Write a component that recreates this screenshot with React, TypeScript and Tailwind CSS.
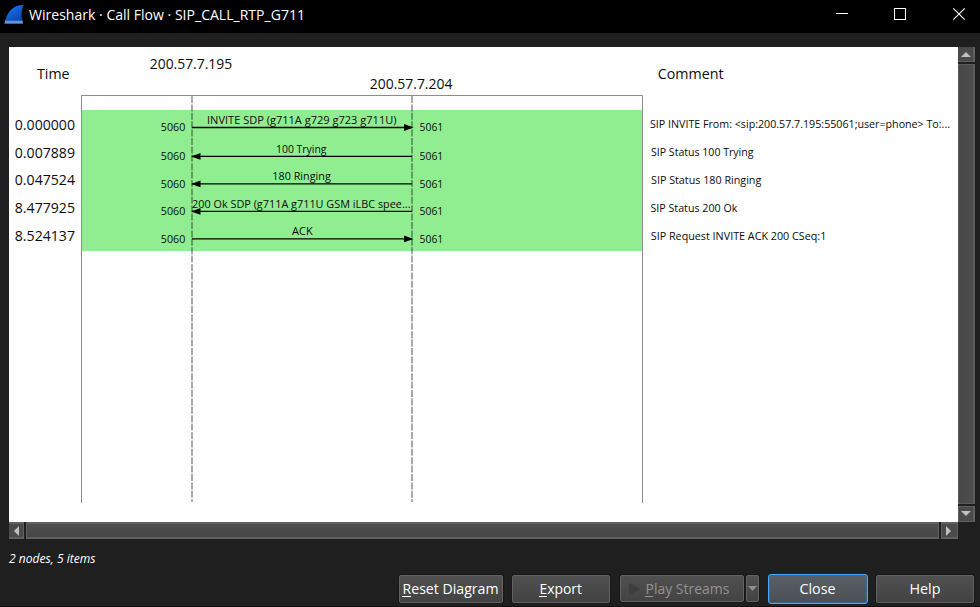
import React from "react";

const INK = "#0c0c0c";

type LabelProps = { x: number; y: number; w: number; size?: number; children: string };

function Label({ x, y, w, size = 11.3, children }: LabelProps) {
  return (
    <text x={x} y={y} fontSize={size} textLength={w} lengthAdjust="spacingAndGlyphs" fill={INK}>
      {children}
    </text>
  );
}

type Row = {
  time: string; timeY: number; portY: number; line: number; dir: "right" | "left";
  label: string; lx: number; lw: number; ly: number;
  comment: string; cx: number; cw: number; cy: number;
};

const rows: Row[] = [
  { time: "0.000000", timeY: 130, portY: 131, line: 127.5, dir: "right", label: "INVITE SDP (g711A g729 g723 g711U)", lx: 207, lw: 189.5, ly: 124, comment: "SIP INVITE From: <sip:200.57.7.195:55061;user=phone> To:...", cx: 650, cw: 300, cy: 128 },
  { time: "0.007889", timeY: 158, portY: 160, line: 156.4, dir: "left", label: "100 Trying", lx: 276, lw: 50.5, ly: 153, comment: "SIP Status 100 Trying", cx: 651, cw: 102.5, cy: 156 },
  { time: "0.047524", timeY: 185, portY: 188, line: 183.9, dir: "left", label: "180 Ringing", lx: 272.3, lw: 58.5, ly: 180, comment: "SIP Status 180 Ringing", cx: 651, cw: 110.3, cy: 184 },
  { time: "8.477925", timeY: 213, portY: 215, line: 211.4, dir: "left", label: "200 Ok SDP (g711A g711U GSM iLBC spee...", lx: 192, lw: 218.5, ly: 208, comment: "SIP Status 200 Ok", cx: 650.5, cw: 86.8, cy: 212 },
  { time: "8.524137", timeY: 241, portY: 243, line: 238.9, dir: "right", label: "ACK", lx: 292, lw: 20.7, ly: 235, comment: "SIP Request INVITE ACK 200 CSeq:1", cx: 650.8, cw: 175.5, cy: 240 },
];

function Arrow({ y, dir }: { y: number; dir: "right" | "left" }) {
  return (
    <g>
      <path d={`M192 ${y}H412`} stroke="#000" strokeWidth="1.4" />
      <path
        d={dir === "right" ? `M413.5 ${y}L404 ${y - 3.4}V${y + 3.4}Z` : `M191 ${y}L200.5 ${y - 3.4}V${y + 3.4}Z`}
        fill="#000"
      />
    </g>
  );
}

function FlowDiagram() {
  return (
    <svg className="block bg-white" width="949" height="475" viewBox="9 47 949 475">
      <rect x="81" y="110" width="561" height="141" fill="#90ee90" />
      <path d="M81.5 503V95.5H642.5V503" fill="none" stroke="#8c8c8c" />
      <path d="M192 96V502M412 96V502" stroke="#000" strokeOpacity="0.42" strokeWidth="1.6" strokeDasharray="7 1.4" />
      <Label x={37} y={79} w={32.5} size={15.3}>Time</Label>
      <Label x={149.8} y={69} w={82.3} size={15.3}>200.57.7.195</Label>
      <Label x={369.8} y={89} w={82.6} size={15.3}>200.57.7.204</Label>
      <Label x={657.8} y={79} w={65.8} size={15.3}>Comment</Label>
      {rows.map((r) => (
        <g key={r.time}>
          <Label x={14.8} y={r.timeY} w={60.2} size={15.3}>{r.time}</Label>
          <Label x={160.8} y={r.portY} w={24.5}>5060</Label>
          <Label x={419.5} y={r.portY} w={23.8}>5061</Label>
          <Label x={r.lx} y={r.ly} w={r.lw}>{r.label}</Label>
          <Arrow y={r.line} dir={r.dir} />
          <Label x={r.cx} y={r.cy} w={r.cw}>{r.comment}</Label>
        </g>
      ))}
    </svg>
  );
}

function Triangle({ d, w, h }: { d: string; w: number; h: number }) {
  return (
    <svg width={w} height={h} viewBox={`0 0 ${w} ${h}`} className="block">
      <path d={d} fill="#c0c0c0" />
    </svg>
  );
}

function VerticalScrollbar() {
  return (
    <div className="flex h-[475px] w-[17px] flex-col gap-[2px] bg-[#1f1f1f]">
      <div className="flex h-[15px] items-center justify-center border-r-2 border-b border-[#606060] bg-[#4a4a4a] pt-px">
        <Triangle d="M0 5L5 0L10 5Z" w={10} h={5} />
      </div>
      <div className="h-[440px] border border-r-2 border-[#5c5c5c] bg-gradient-to-r from-[#474747] to-[#4e4e4e]" />
      <div className="flex h-[16px] items-center justify-center border border-r-2 border-[#606060] bg-[#4a4a4a] pb-[2px]">
        <Triangle d="M0 0H10L5 5Z" w={10} h={5} />
      </div>
    </div>
  );
}

function HorizontalScrollbar() {
  return (
    <div className="flex h-[17px] w-[949px] gap-[2px] bg-[#1f1f1f]">
      <div className="flex w-[15px] items-center justify-center border-y-2 border-r border-[#606060] bg-[#4a4a4a]">
        <Triangle d="M5 0V10L0 5Z" w={5} h={10} />
      </div>
      <div className="w-[913px] border-y-2 border-x border-[#606060] bg-gradient-to-b from-[#4e4e4e] to-[#474747]" />
      <div className="flex w-[17px] items-center justify-center border-y-2 border-x border-[#606060] bg-[#4a4a4a] pr-[2px]">
        <Triangle d="M0 0V10L5 5Z" w={5} h={10} />
      </div>
    </div>
  );
}

function Caption({ w, text, mnemonic, color = "#ffffff" }: { w: number; text: string; mnemonic?: number; color?: string }) {
  return (
    <svg width={w + 4} height="26" className="block shrink-0 overflow-visible">
      <text x="1.5" y="18" fontSize="15.3" textLength={w} lengthAdjust="spacingAndGlyphs" fill={color}>{text}</text>
      {mnemonic && <path d={`M1 20.5H${mnemonic + 1}`} stroke={color} />}
    </svg>
  );
}

const button = "flex items-center justify-center rounded-[2px] border border-[#626262] bg-gradient-to-b from-[#505050] to-[#434343] shadow-[0_0_0_1px_#181818]";

export default function App() {
  return (
    <div className="flex h-[607px] w-[980px] flex-col overflow-hidden bg-[#1f1f1f] font-['Open_Sans','Noto_Sans',sans-serif]">
      <header className="flex h-[33px] shrink-0 items-start bg-black">
        <svg width="30" height="30" className="block">
          <defs>
            <linearGradient id="fin" x1="0" y1="0" x2="0.6" y2="1">
              <stop offset="0" stopColor="#66b4f4" />
              <stop offset="0.35" stopColor="#1769dc" />
              <stop offset="1" stopColor="#0741ad" />
            </linearGradient>
          </defs>
          <path d="M4.5 23.3C7.2 11.5 13 5 23.5 4.7C21.3 10.5 21 16 23 23.3Z" fill="url(#fin)" />
          <path d="M5 21.7H22.7" stroke="#5b93e2" strokeWidth="2" />
          <path d="M4.5 23.1H23" stroke="#b6d8ff" strokeWidth="0.7" />
        </svg>
        <svg width="282" height="30" className="-ml-px block overflow-visible">
          <text x="0" y="20" fontSize="15.3" textLength="276" lengthAdjust="spacingAndGlyphs" fill="#fff">Wireshark · Call Flow · SIP_CALL_RTP_G711</text>
        </svg>
        <svg width="140" height="30" viewBox="830 0 140 30" className="mr-[10px] ml-auto block" fill="none" stroke="#fff">
          <path d="M836 13.5H848" />
          <rect x="894.5" y="8.5" width="11" height="11" />
          <path d="M953.3 8.3L964.7 19.7M964.7 8.3L953.3 19.7" strokeWidth="1.1" />
        </svg>
      </header>
      <main className="mt-[14px] ml-[9px] flex w-[966px] flex-col">
        <div className="flex">
          <FlowDiagram />
          <VerticalScrollbar />
        </div>
        <HorizontalScrollbar />
        <svg width="96" height="24" className="mt-[7px] block overflow-visible">
          <text x="0" y="17" fontSize="12.2" fontStyle="italic" textLength="86.5" lengthAdjust="spacingAndGlyphs" fill="#fff">2 nodes, 5 items</text>
        </svg>
      </main>
      <footer className="mt-[4px] ml-[399px] flex h-[30px] items-start">
        <div className={`${button} mt-px h-[28px] w-[104px]`}><Caption w={96} text="Reset Diagram" mnemonic={9} /></div>
        <div className={`${button} mt-px ml-[9px] h-[28px] w-[98px]`}><Caption w={42.5} text="Export" mnemonic={8} /></div>
        <div className={`${button} mt-px ml-[10px] h-[27px] w-[124px]`}>
          <svg width="11" height="12" className="mr-[4px] -ml-[4px] block shrink-0"><path d="M0 0L11 6L0 12Z" fill="#3d3d3d" /></svg>
          <Caption w={84} text="Play Streams" mnemonic={8} color="#929292" />
        </div>
        <div className={`${button} mt-px ml-[2px] h-[27px] w-[13px]`}>
          <svg width="9" height="5" className="block shrink-0"><path d="M0 0H9L4.5 5Z" fill="#8e8e8e" /></svg>
        </div>
        <div className="ml-[9px] flex h-[30px] w-[100px] items-center justify-center rounded-[3px] border border-[#45aaff] bg-gradient-to-b from-[#596068] to-[#4b4f55] shadow-[inset_0_0_0_1px_#3f6686]">
          <Caption w={36} text="Close" />
        </div>
        <div className={`${button} mt-px ml-[8px] h-[28px] w-[98px]`}><Caption w={31} text="Help" /></div>
      </footer>
      <div className="mt-auto h-px shrink-0 bg-[#101010]" />
    </div>
  );
}
